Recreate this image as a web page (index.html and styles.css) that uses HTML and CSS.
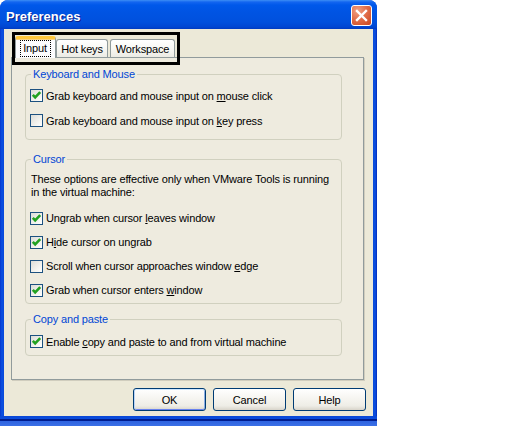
FILE: index.html
```html
<!DOCTYPE html>
<html>
<head>
<meta charset="utf-8">
<title>Preferences</title>
<link rel="stylesheet" href="styles.css">
</head>
<body>
<div class="window">
  <div class="titlebar">
    <span class="title">Preferences</span>
    <span class="close"><svg width="13" height="13" viewBox="0 0 13 13"><path d="M2 2 L11 11 M11 2 L2 11" stroke="#fff" stroke-width="2.4" stroke-linecap="square"/></svg></span>
  </div>
  <div class="client">
    <div class="tabs">
      <div class="tab active"><span class="focus">Input</span></div>
      <div class="tab">Hot keys</div>
      <div class="tab">Workspace</div>
    </div>
    <div class="panel">
      <fieldset class="group g1">
        <legend>Keyboard and Mouse</legend>
        <div class="row"><span class="cb on"><svg width="11" height="11" viewBox="0 0 11 11"><path d="M1.8 4.8 L4.2 7.4 L9.2 2.2" fill="none" stroke="#21A121" stroke-width="2.6"/></svg></span><span>Grab keyboard and mouse input on <u>m</u>ouse click</span></div>
        <div class="row"><span class="cb"></span><span>Grab keyboard and mouse input on <u>k</u>ey press</span></div>
      </fieldset>
      <fieldset class="group g2">
        <legend>Cursor</legend>
        <p class="note">These options are effective only when VMware Tools is running in the virtual machine:</p>
        <div class="row"><span class="cb on"><svg width="11" height="11" viewBox="0 0 11 11"><path d="M1.8 4.8 L4.2 7.4 L9.2 2.2" fill="none" stroke="#21A121" stroke-width="2.6"/></svg></span><span>Ungrab when cursor <u>l</u>eaves window</span></div>
        <div class="row"><span class="cb on"><svg width="11" height="11" viewBox="0 0 11 11"><path d="M1.8 4.8 L4.2 7.4 L9.2 2.2" fill="none" stroke="#21A121" stroke-width="2.6"/></svg></span><span>H<u>i</u>de cursor on ungrab</span></div>
        <div class="row"><span class="cb"></span><span>Scroll when cursor approaches window <u>e</u>dge</span></div>
        <div class="row"><span class="cb on"><svg width="11" height="11" viewBox="0 0 11 11"><path d="M1.8 4.8 L4.2 7.4 L9.2 2.2" fill="none" stroke="#21A121" stroke-width="2.6"/></svg></span><span>Grab when cursor enters <u>w</u>indow</span></div>
      </fieldset>
      <fieldset class="group g3">
        <legend>Copy and paste</legend>
        <div class="row"><span class="cb on"><svg width="11" height="11" viewBox="0 0 11 11"><path d="M1.8 4.8 L4.2 7.4 L9.2 2.2" fill="none" stroke="#21A121" stroke-width="2.6"/></svg></span><span>Enable <u>c</u>opy and paste to and from virtual machine</span></div>
      </fieldset>
    </div>
    <div class="buttons">
      <span class="btn default">OK</span>
      <span class="btn">Cancel</span>
      <span class="btn">Help</span>
    </div>
  </div>
  <div class="frame-bottom"></div>
</div>
<div class="annot"></div>
</body>
</html>
```
FILE: styles.css
```css
html, body {
  margin: 0;
  padding: 0;
  background: #ffffff;
}
body {
  width: 512px;
  height: 426px;
  position: relative;
  overflow: hidden;
  font-family: "Liberation Sans", Arial, sans-serif;
  font-size: 11px;
  letter-spacing: -0.15px;
  color: #000;
}
.window {
  width: 377px;
  height: 426px;
  background: linear-gradient(to right, #0831C8 0, #0A4BDC 1px, #0B50E0 3px, #0A46D6 4px, #0A46D6 373px, #0B50E0 374px, #0A46D6 376px, #0022B0 377px);
  border-radius: 8px 8px 0 0;
  display: flex;
  flex-direction: column;
}
.titlebar {
  height: 29px;
  box-sizing: border-box;
  padding: 5px 5px 0 6px;
  display: flex;
  justify-content: space-between;
  align-items: flex-start;
  border-radius: 8px 8px 0 0;
  background: linear-gradient(to bottom, #3D8EF5 0, #1466F0 2px, #0058EA 5px, #0054E3 12px, #0050DD 22px, #0046D2 27px, #003BC0 29px);
}
.title {
  color: #fff;
  font-weight: bold;
  font-size: 13px;
  letter-spacing: 0;
  line-height: 21px;
  padding-top: 1px;
  text-shadow: 1px 1px 0 #0A1E8A;
}
.close {
  width: 21px;
  height: 21px;
  box-sizing: border-box;
  border: 1px solid #fff;
  border-radius: 3px;
  background: radial-gradient(circle at 30% 25%, #F0A184 0, #E2704C 45%, #C9451F 100%);
  display: flex;
  align-items: center;
  justify-content: center;
}
.client {
  height: 387px;
  margin: 0 4px;
  box-sizing: border-box;
  background: #ECE9D8;
  padding: 7px 9px 0 7px;
  display: flex;
  flex-direction: column;
}
.tabs {
  height: 21px;
  display: flex;
  align-items: flex-end;
  padding-left: 6px;
  gap: 2px;
}
.tab {
  height: 18px;
  box-sizing: border-box;
  border: 1px solid #919B9C;
  border-bottom: none;
  border-radius: 3px 3px 0 0;
  background: linear-gradient(to bottom, #FFFFFF 0, #F8F8F4 50%, #ECEBE4 100%);
  display: flex;
  align-items: center;
  justify-content: center;
  padding-top: 1px;
}
.tab:nth-child(2) { width: 52px; }
.tab:nth-child(3) { width: 65px; }
.tab.active {
  width: 41px;
  height: 22px;
  margin: 0 -2px -1px -2px;
  position: relative;
  z-index: 1;
  border-top: 3px solid #FFC83C;
  box-shadow: inset 0 1px 0 #F9D482;
  background: #FCFCFE;
  padding-top: 0;
  align-items: flex-start;
}
.focus {
  border: 1px dotted #000;
  padding: 1px 3px 1px 2px;
  margin-top: 1px;
  line-height: 13px;
}
.panel {
  height: 323px;
  box-sizing: border-box;
  border: 1px solid #919B9C;
  box-shadow: 1px 1px 0 #D0CDBE;
  background: #EEEBDF;
  padding: 10px 21px 0 13px;
  display: flex;
  flex-direction: column;
}
.group {
  margin: 0;
  min-inline-size: 0;
  border: 1px solid #D0D0BF;
  border-radius: 4px;
  padding: 0 0 0 4px;
}
.group legend {
  padding: 0 2px;
  margin-left: 1px;
  color: #0046D5;
  line-height: 13px;
}
.g1 { padding-top: 2px; padding-bottom: 6px; }
.g2 { margin-top: 13px; padding-bottom: 1px; }
.g3 { margin-top: 9px; padding-top: 3px; padding-bottom: 1px; }
.row {
  height: 25px;
  display: flex;
  align-items: center;
  gap: 3px;
}
.g2 .row { height: 24px; }
.note {
  margin: 7px 0 7px 1px;
  line-height: 13px;
  width: 305px;
}
.cb {
  width: 13px;
  height: 13px;
  box-sizing: border-box;
  border: 1px solid #1C5180;
  background: linear-gradient(135deg, #DCDCD7 0, #F2F2EE 60%, #FFFFFF 100%);
  display: flex;
  align-items: center;
  justify-content: center;
  flex: none;
}
u { text-decoration: underline; text-underline-offset: 1px; }
.buttons {
  margin-top: 8px;
  margin-right: -2px;
  display: flex;
  justify-content: flex-end;
  gap: 7px;
}
.btn {
  width: 73px;
  height: 23px;
  box-sizing: border-box;
  border: 1px solid #003C74;
  border-radius: 3px;
  background: linear-gradient(to bottom, #FFFFFF 0, #F7F6F2 40%, #EEEDE6 80%, #D8D4CA 100%);
  display: flex;
  align-items: center;
  justify-content: center;
}
.btn.default {
  box-shadow: inset 0 1px 0 #CEE7FF, inset 1px 0 0 #BCD4F6, inset -1px 0 0 #89ADE4, inset 0 -1px 0 #6982EE;
}
.frame-bottom {
  height: 10px;
  background: linear-gradient(to bottom, #0A46D6 0, #0A4EDE 3px, #001D8E 3px, #001D8E 5px, #2E63E0 5px, #3B70E6 10px);
}
.annot {
  position: absolute;
  left: 12px;
  top: 32px;
  width: 168px;
  height: 33px;
  box-sizing: border-box;
  border: 3px solid #000;
}
```
